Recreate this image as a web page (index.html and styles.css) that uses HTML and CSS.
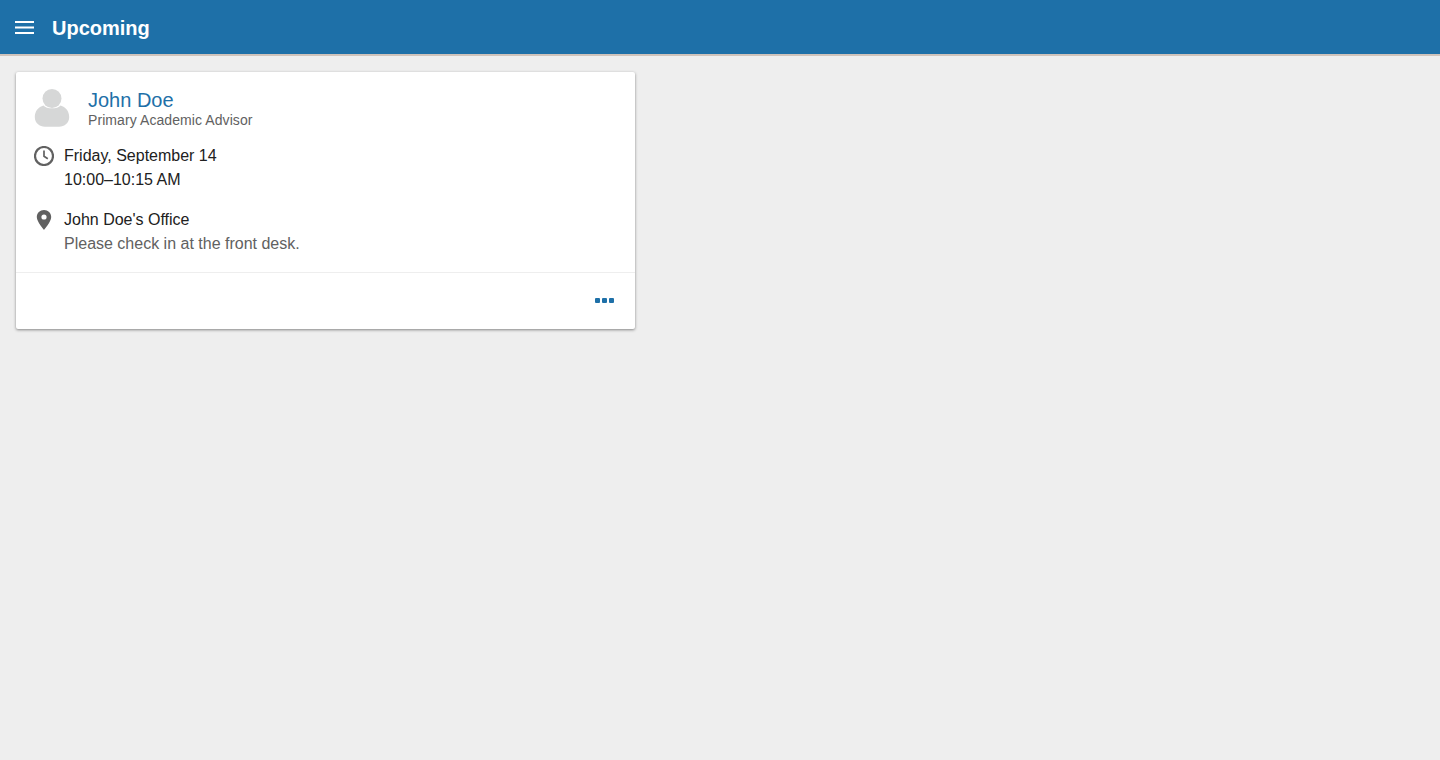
FILE: index.html
```html
<!DOCTYPE html>
<html lang="en">
<head>
    <meta charset="UTF-8">
    <meta name="viewport" content="width=device-width, initial-scale=1.0">
    <title>Upcoming</title>
    <link rel="stylesheet" href="styles.css">
</head>
<body>
    <!-- Top bar -->
    <header class="toolbar">
        <svg class="menu-icon" width="19" height="14" viewBox="0 0 19 14">
            <path d="M0 1h19M0 6.500h19M0 12h19" stroke="#fff" stroke-width="2" fill="none"/>
        </svg>
        <h1>Upcoming</h1>
    </header>

    <main class="content">
        <!-- Appointment card -->
        <div class="card">
            <div class="card-body">
                <div class="person">
                    <svg class="avatar" width="36" height="38" viewBox="0 0 36 38">
                        <circle cx="18" cy="9.500" r="9.500" fill="#d6d7d7"/>
                        <path d="M9.500 16.500c3 3.800 14 3.800 17 0 5 1.500 8.700 5.500 8.700 11.500 0 6-4.700 9.700-10.200 9.700h-14C5.500 37.700.8 34 .8 28c0-6 3.700-10 8.700-11.500z" fill="#d6d7d7"/>
                    </svg>
                    <div>
                        <div class="person-name">John Doe</div>
                        <div class="person-role">Primary Academic Advisor</div>
                    </div>
                </div>

                <div class="detail">
                    <svg class="detail-icon" width="20" height="20" viewBox="0 0 20 20">
                        <circle cx="10" cy="10" r="9" fill="none" stroke="#616161" stroke-width="2.200"/>
                        <path d="M10 4.500v5.800l3.800 2.400" fill="none" stroke="#616161" stroke-width="1.700"/>
                    </svg>
                    <div>
                        <div>Friday, September 14</div>
                        <div>10:00–10:15 AM</div>
                    </div>
                </div>

                <div class="detail">
                    <svg class="detail-icon" width="20" height="20" viewBox="0 0 20 20">
                        <path fill-rule="evenodd" d="M10 0c-4 0-7.200 3.100-7.200 7.100C2.800 12 10 20 10 20s7.200-8 7.200-12.900C17.200 3.100 14 0 10 0zm0 9.600a2.600 2.600 0 1 1 0-5.200 2.600 2.600 0 0 1 0 5.200z" fill="#616161"/>
                    </svg>
                    <div>
                        <div>John Doe's Office</div>
                        <div class="muted">Please check in at the front desk.</div>
                    </div>
                </div>
            </div>

            <div class="card-actions">
                <div class="dots">
                    <span></span><span></span><span></span>
                </div>
            </div>
        </div>
    </main>
</body>
</html>
```
FILE: styles.css
```css
/* Global styles */
body {
    margin: 0;
    min-height: 760px;
    background-color: #eeeeee;
    font-family: 'Liberation Sans', Arial, sans-serif;
    color: #212121;
}

/* Top bar */
.toolbar {
    display: flex;
    align-items: center;
    height: 54px;
    padding: 2px 0 0 15px;
    box-sizing: border-box;
    background-color: #1e70a8;
    box-shadow: 0 2px 0 #cfc3bb;
}

.menu-icon {
    flex: none;
}

.toolbar h1 {
    margin: 0 0 0 18px;
    color: #fff;
    font-size: 20px;
    font-weight: bold;
}

/* Card styles */
.content {
    padding: 18px 16px 16px;
}

.card {
    width: 619px;
    background-color: #fff;
    border-radius: 2px;
    box-shadow: 0 1px 3px rgba(0, 0, 0, 0.45);
}

.card-body {
    padding: 16px 18px;
    border-bottom: 1px solid #eeeeee;
}

.person {
    display: flex;
    align-items: center;
    gap: 18px;
    margin-bottom: 16px;
}

.avatar {
    flex: none;
}

.person-name {
    color: #1e70a8;
    font-size: 20px;
    line-height: 24px;
}

.person-role {
    color: #616161;
    font-size: 14px;
    line-height: 16px;
    letter-spacing: 0.08px;
}

.detail {
    display: flex;
    gap: 10px;
    margin-bottom: 16px;
    font-size: 16px;
    line-height: 24px;
}

.detail:last-child {
    margin-bottom: 0;
}

.detail-icon {
    flex: none;
    margin-top: 2px;
}

.muted {
    color: #616161;
}

.card-actions {
    display: flex;
    justify-content: flex-end;
    align-items: center;
    height: 56px;
    padding: 0 21px 1px 0;
    box-sizing: border-box;
}

.dots {
    display: flex;
    gap: 2px;
}

.dots span {
    width: 5px;
    height: 5px;
    background-color: #1e70a8;
    border-radius: 1px;
}
```
